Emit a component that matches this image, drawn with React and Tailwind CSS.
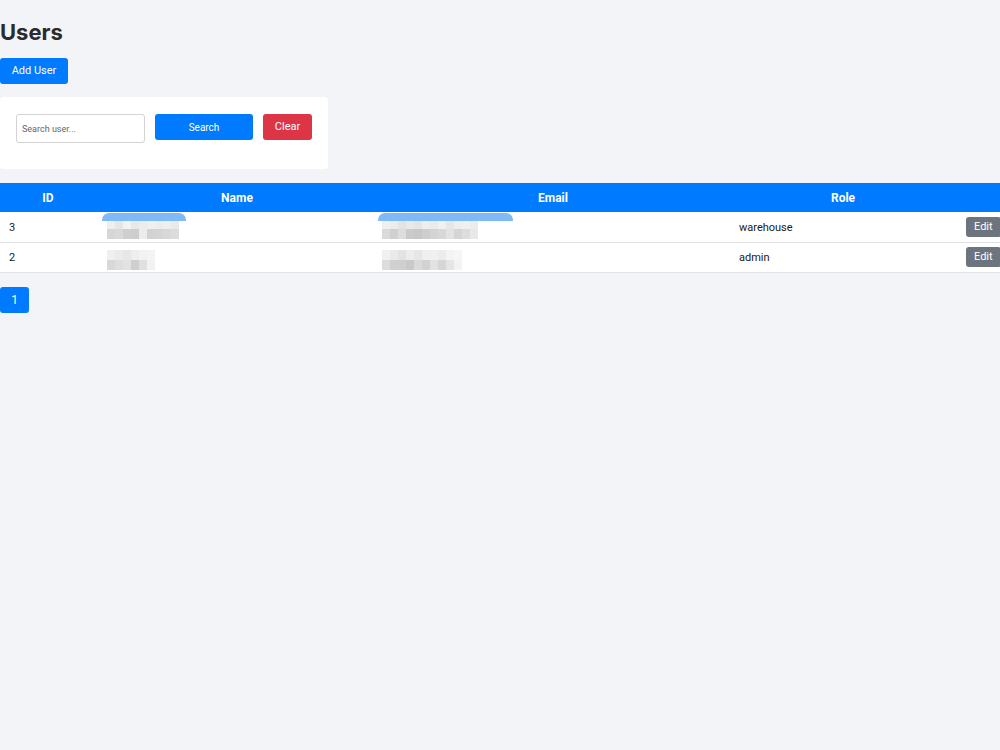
const users = [
  { id: 3, role: "warehouse", name: [["#eee", "#e6e6e6", "#f2f2f2", "#e8e8e8", "#ececec", "#f0f0f0", "#ededed", "#efefef", "#eaeaea"], ["#d6d6d6", "#d9d9d9", "#cfcfcf", "#cdcdcd", "#ececec", "#d2d2d2", "#d4d4d4", "#d8d8d8", "#dcdcdc"]], email: [["#f0f0f0", "#ececec", "#e4e4e4", "#e9e9e9", "#e5e5e5", "#eeeeee", "#ebebeb", "#f1f1f1", "#e7e7e7", "#eeeeee", "#f0f0f0", "#ececec"], ["#dadada", "#d0d0d0", "#dddddd", "#cacaca", "#c8c8c8", "#cecece", "#d4d4d4", "#d8d8d8", "#e3e3e3", "#d5d5d5", "#dddddd", "#e8e8e8"]], top: true },
  { id: 2, role: "admin", name: [["#efefef", "#ebebeb", "#e7e7e7", "#eeeeee", "#f2f2f2", "#f4f4f4"], ["#d8d8d8", "#dedede", "#e2e2e2", "#cfcfcf", "#e0e0e0", "#f2f2f2"]], email: [["#f0f0f0", "#eaeaea", "#e3e3e3", "#ececec", "#e6e6e6", "#efefef", "#f0f0f0", "#ececec", "#f4f4f4", "#f6f6f6"], ["#dcdcdc", "#d0d0d0", "#cfcfcf", "#c9c9c9", "#dadada", "#d2d2d2", "#e2e2e2", "#d6d6d6", "#e5e5e5", "#f3f3f3"]] },
];

function Pixels({ rows, top, wide }) {
  return (
    <div className="relative inline-flex flex-col">
      {top && (
        <div
          className={
            wide
              ? "absolute -top-[6px] -left-[4px] -right-[35px] h-[8px] rounded-t-[7px] bg-[#80b9f7] blur-[0.5px]"
              : "absolute -top-[6px] -left-[5px] -right-[7px] h-[8px] rounded-t-[7px] bg-[#80b9f7] blur-[0.5px]"
          }
        />
      )}
      {rows.map((r, i) => (
        <div key={i} className="flex">
          {r.map((c, j) => (
            <div key={j} className="w-[8px] h-[10px]" style={{ background: c }} />
          ))}
        </div>
      ))}
    </div>
  );
}

export default function App() {
  return (
    <div className="min-h-[750px] w-[1000px] overflow-hidden bg-[#f3f4f8] text-[#1a1a1a] font-['Roboto',sans-serif]">
      <h1 className="pt-[18px] text-[22px] leading-[28px] font-bold font-['Inter',sans-serif] text-[#2b2b2b]">Users</h1>
      <button className="mt-[12px] h-[26px] w-[68px] rounded-[3px] bg-[#007bff] text-white text-[11px]">Add User</button>
      <div className="mt-[13px] w-[328px] h-[72px] bg-white rounded-[4px] px-[16px] pt-[17px] flex items-start gap-[10px]">
        <input
          placeholder="Search user..."
          className="w-[129px] h-[29px] border border-[#d3d3d3] rounded-[3px] px-[5px] text-[9px] placeholder:text-[#666] outline-none"
        />
        <button className="w-[98px] h-[26px] rounded-[3px] bg-[#007bff] text-white text-[10px]">Search</button>
        <button className="w-[49px] h-[26px] rounded-[3px] bg-[#dc3545] text-white text-[11px]">Clear</button>
      </div>
      <table className="mt-[14px] w-[1010px] table-fixed border-collapse bg-white text-[11px]">
        <colgroup>
          <col className="w-[96px]" />
          <col className="w-[282px]" />
          <col className="w-[350px]" />
          <col className="w-[230px]" />
          <col className="w-[52px]" />
        </colgroup>
        <thead>
          <tr className="bg-[#007bff] text-white h-[29px]">
            <th className="font-bold text-[12px]">ID</th>
            <th className="font-bold text-[12px]">Name</th>
            <th className="font-bold text-[12px]">Email</th>
            <th className="font-bold text-[12px]">Role</th>
            <th></th>
          </tr>
        </thead>
        <tbody>
          {users.map((u) => (
            <tr key={u.id} className="h-[30px] border-b border-[#e2e2e2]">
              <td className="pl-[9px] pt-[2px]">{u.id}</td>
              <td className="pl-[11px] pt-[4px]"><Pixels rows={u.name} top={u.top} /></td>
              <td className="pl-[4px] pt-[4px]"><Pixels rows={u.email} top={u.top} wide /></td>
              <td className="pl-[11px] pt-[2px]">{u.role}</td>
              <td className="pl-[8px]">
                <button className="h-[20px] px-[8px] rounded-[3px] bg-[#6c757d] text-white text-[11px]">Edit</button>
              </td>
            </tr>
          ))}
        </tbody>
      </table>
      <button className="mt-[14px] w-[29px] h-[26px] rounded-[3px] bg-[#007bff] text-white text-[12px]">1</button>
    </div>
  );
}
